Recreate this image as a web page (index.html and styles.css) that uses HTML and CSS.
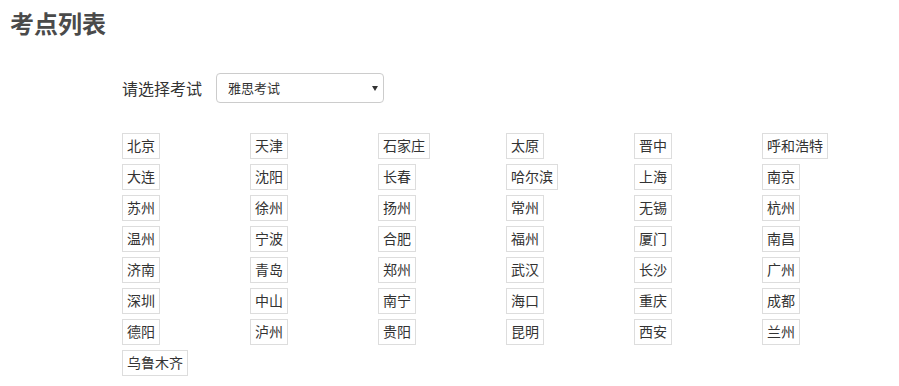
FILE: index.html
```html
<!DOCTYPE html>
<html lang="zh-CN">
  <head>
    <meta charset="UTF-8" />
    <meta name="viewport" content="width=device-width, initial-scale=1.0" />
    <title>考点列表</title>
    <link rel="stylesheet" href="styles.css">
  </head>
  <body>
    <h1 class="page-title">考点列表</h1>

    <div class="exam-picker">
      <label for="exam">请选择考试</label>
      <div class="select-wrap">
        <select id="exam" name="exam">
          <option value="ielts">雅思考试</option>
          <option value="toefl">托福考试</option>
        </select>
      </div>
    </div>

    <ul class="site-list">
      <li><span class="site">北京</span></li>
      <li><span class="site">天津</span></li>
      <li><span class="site">石家庄</span></li>
      <li><span class="site">太原</span></li>
      <li><span class="site">晋中</span></li>
      <li><span class="site">呼和浩特</span></li>
      <li><span class="site">大连</span></li>
      <li><span class="site">沈阳</span></li>
      <li><span class="site">长春</span></li>
      <li><span class="site">哈尔滨</span></li>
      <li><span class="site">上海</span></li>
      <li><span class="site">南京</span></li>
      <li><span class="site">苏州</span></li>
      <li><span class="site">徐州</span></li>
      <li><span class="site">扬州</span></li>
      <li><span class="site">常州</span></li>
      <li><span class="site">无锡</span></li>
      <li><span class="site">杭州</span></li>
      <li><span class="site">温州</span></li>
      <li><span class="site">宁波</span></li>
      <li><span class="site">合肥</span></li>
      <li><span class="site">福州</span></li>
      <li><span class="site">厦门</span></li>
      <li><span class="site">南昌</span></li>
      <li><span class="site">济南</span></li>
      <li><span class="site">青岛</span></li>
      <li><span class="site">郑州</span></li>
      <li><span class="site">武汉</span></li>
      <li><span class="site">长沙</span></li>
      <li><span class="site">广州</span></li>
      <li><span class="site">深圳</span></li>
      <li><span class="site">中山</span></li>
      <li><span class="site">南宁</span></li>
      <li><span class="site">海口</span></li>
      <li><span class="site">重庆</span></li>
      <li><span class="site">成都</span></li>
      <li><span class="site">德阳</span></li>
      <li><span class="site">泸州</span></li>
      <li><span class="site">贵阳</span></li>
      <li><span class="site">昆明</span></li>
      <li><span class="site">西安</span></li>
      <li><span class="site">兰州</span></li>
      <li><span class="site">乌鲁木齐</span></li>
    </ul>
  </body>
</html>
```

FILE: styles.css
```css
body {
  margin: 0;
  padding: 10px 10px 0;
  font-family: "Liberation Sans", "Noto Sans CJK SC", sans-serif;
  color: #333;
  background-color: #ffffff;
}

.page-title {
  margin: 0;
  font-size: 24px;
  line-height: 30px;
  font-weight: bold;
  color: #4a4a4a;
}

.exam-picker {
  display: flex;
  align-items: center;
  margin: 33px 0 0 112px;
}

.exam-picker label {
  font-size: 16px;
  margin-right: 14px;
  color: #333;
}

.select-wrap {
  position: relative;
  width: 168px;
}

.select-wrap::after {
  content: "";
  position: absolute;
  right: 6px;
  top: 13px;
  border-left: 3px solid transparent;
  border-right: 3px solid transparent;
  border-top: 5px solid #333;
  pointer-events: none;
}

select {
  width: 100%;
  height: 30px;
  padding: 0 20px 0 11px;
  border: 1px solid #ccc;
  border-radius: 4px;
  background-color: #fff;
  font-family: inherit;
  font-size: 13px;
  color: #333;
  appearance: none;
  -webkit-appearance: none;
}

.site-list {
  list-style: none;
  margin: 30px 0 0 112px;
  padding: 0;
  display: grid;
  grid-template-columns: repeat(6, 128px);
  row-gap: 5px;
}

.site {
  display: inline-block;
  padding: 0 4px;
  border: 1px solid #ddd;
  font-size: 14px;
  line-height: 24px;
  color: #333;
}
```
